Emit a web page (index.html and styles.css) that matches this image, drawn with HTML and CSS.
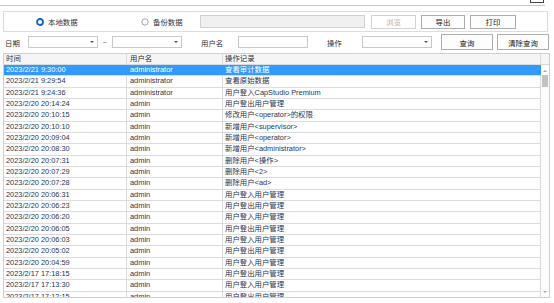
FILE: index.html
```html
<html lang="zh-CN">
<head>
  <meta charset="UTF-8">
  <title>审计日志</title>
  <link rel="stylesheet" href="styles.css">
</head>
<body>

  <div class="titlebar">
    <div class="title-btn"></div>
  </div>

  <div class="groupbox">
    <label class="radio radio-local">
      <svg width="8" height="8" viewBox="0 0 8 8"><circle cx="4" cy="4" r="3" fill="#fff" stroke="#1464c8" stroke-width="1.8"/></svg>
      <span>本地数据</span>
    </label>
    <label class="radio radio-backup">
      <svg width="8" height="8" viewBox="0 0 8 8"><circle cx="4" cy="4" r="3.2" fill="#fff" stroke="#8a8a8a" stroke-width="0.8"/></svg>
      <span>备份数据</span>
    </label>
    <div class="path-input"></div>
    <button class="btn btn-browse" disabled>浏览</button>
    <button class="btn btn-export">导出</button>
    <button class="btn btn-print">打印</button>
  </div>

  <div class="filterbar">
    <span class="flabel flabel-date">日期</span>
    <div class="combo"><i class="arrow"></i></div>
    <span class="tilde">~</span>
    <div class="combo"><i class="arrow"></i></div>
    <span class="flabel flabel-user">用户名</span>
    <div class="textbox"></div>
    <span class="flabel flabel-op">操作</span>
    <div class="combo"><i class="arrow"></i></div>
    <button class="btn btn-query">查询</button>
    <button class="btn btn-clear">清除查询</button>
  </div>

  <div class="grid">
    <div class="grid-head">
      <div class="cell c-time">时间</div>
      <div class="cell c-user">用户名</div>
      <div class="cell c-op">操作记录</div>
      <div class="cell c-pad"></div>
    </div>
    <div class="grid-main">
      <div class="grid-body" id="rows"></div>
      <div class="vscroll">
        <i class="sc-up"></i>
        <div class="sc-thumb"></div>
        <i class="sc-down"></i>
      </div>
    </div>
  </div>

  <script>
    const logs = [
      ['2023/2/21 9:30:00', 'administrator', '查看审计数据'],
      ['2023/2/21 9:29:54', 'administrator', '查看原始数据'],
      ['2023/2/21 9:24:36', 'administrator', '用户登入CapStudio Premium'],
      ['2023/2/20 20:14:24', 'admin', '用户登出用户管理'],
      ['2023/2/20 20:10:15', 'admin', '修改用户<operator>的权限'],
      ['2023/2/20 20:10:10', 'admin', '新增用户<supervisor>'],
      ['2023/2/20 20:09:04', 'admin', '新增用户<operator>'],
      ['2023/2/20 20:08:30', 'admin', '新增用户<administrator>'],
      ['2023/2/20 20:07:31', 'admin', '删除用户<操作>'],
      ['2023/2/20 20:07:29', 'admin', '删除用户<2>'],
      ['2023/2/20 20:07:28', 'admin', '删除用户<ad>'],
      ['2023/2/20 20:06:31', 'admin', '用户登入用户管理'],
      ['2023/2/20 20:06:23', 'admin', '用户登出用户管理'],
      ['2023/2/20 20:06:20', 'admin', '用户登入用户管理'],
      ['2023/2/20 20:06:05', 'admin', '用户登出用户管理'],
      ['2023/2/20 20:06:03', 'admin', '用户登入用户管理'],
      ['2023/2/20 20:05:02', 'admin', '用户登出用户管理'],
      ['2023/2/20 20:04:59', 'admin', '用户登入用户管理'],
      ['2023/2/17 17:18:15', 'admin', '用户登出用户管理'],
      ['2023/2/17 17:13:30', 'admin', '用户登入用户管理'],
      ['2023/2/17 17:12:15', 'admin', '用户登出用户管理']
    ];

    function esc(s) {
      return s.replace(/&/g, '&amp;').replace(/</g, '&lt;').replace(/>/g, '&gt;');
    }

    const body = document.getElementById('rows');
    logs.forEach((r, i) => {
      const row = document.createElement('div');
      row.className = i === 0 ? 'row selected' : 'row';
      row.innerHTML = `
        <div class="cell c-time">${esc(r[0])}</div>
        <div class="cell c-user">${esc(r[1])}</div>
        <div class="cell c-op">${esc(r[2])}</div>
      `;
      body.appendChild(row);
    });
  </script>

</body>
</html>
```

FILE: styles.css
```css
body {
  margin: 0;
  background: #fff;
  font-family: "Liberation Sans", "Noto Sans CJK SC", sans-serif;
  font-size: 7.4px;
  color: #333;
}
.titlebar {
  width: 545px;
  height: 5px;
  border-bottom: 1px solid #c8c8c8;
  display: flex;
  justify-content: flex-end;
}
.title-btn {
  width: 12px;
  height: 2px;
  margin-right: 1px;
  border: 1px solid #444;
  border-top: none;
}

/* data source group */
.groupbox {
  margin: 5px 0 0 3px;
  width: 545px;
  height: 21px;
  box-sizing: border-box;
  border: 1px solid #dcdcdc;
  display: flex;
  align-items: center;
}
.radio {
  display: flex;
  align-items: center;
  gap: 4px;
  color: #333;
}
.radio svg {
  display: block;
}
.radio-local {
  margin-left: 32px;
  width: 105px;
}
.radio-backup {
  width: 59px;
}
.path-input {
  width: 165px;
  height: 13px;
  box-sizing: border-box;
  background: #f0f0f0;
  border: 1px solid #d0d0d0;
}
.btn {
  height: 14px;
  box-sizing: border-box;
  padding: 0;
  font-family: inherit;
  font-size: 7.4px;
  color: #222;
  background: #fdfdfd;
  border: 1px solid #adadad;
  border-radius: 0;
}
.btn-browse {
  margin-left: 6px;
  width: 45px;
  color: #b4b4b4;
  border-color: #d2d2d2;
  background: #fff;
}
.btn-export {
  margin-left: 5px;
  width: 44px;
}
.btn-print {
  margin-left: 5px;
  width: 46px;
}

/* filter row */
.filterbar {
  margin-top: 2px;
  height: 16px;
  display: flex;
  align-items: center;
}
.flabel {
  color: #333;
}
.flabel-date {
  margin-left: 5px;
  width: 23px;
}
.flabel-user {
  margin-left: 19px;
  width: 37px;
}
.flabel-op {
  margin-left: 19px;
  width: 35px;
}
.tilde {
  width: 14px;
  text-align: center;
  color: #666;
}
.combo, .textbox {
  width: 70px;
  height: 12px;
  box-sizing: border-box;
  border: 1px solid #c8c8c8;
  background: #fff;
  position: relative;
}
.arrow {
  position: absolute;
  right: 3px;
  top: 4px;
  width: 0;
  height: 0;
  border-left: 2px solid transparent;
  border-right: 2px solid transparent;
  border-top: 2px solid #555;
}
.btn-query {
  margin-left: 9px;
  width: 52px;
  height: 16px;
}
.btn-clear {
  margin-left: 4px;
  width: 52px;
  height: 16px;
}

/* log grid */
.grid {
  margin: 3px 0 0 3px;
  width: 547px;
  height: 245px;
  box-sizing: border-box;
  border: 1px solid #cfcfcf;
  display: flex;
  flex-direction: column;
  overflow: hidden;
}
.grid-head {
  display: flex;
  height: 11px;
  box-sizing: border-box;
  background: #f5f5f5;
  border-bottom: 1px solid #dadada;
  line-height: 10px;
  color: #333;
}
.cell {
  box-sizing: border-box;
  border-right: 1px solid #dadada;
  white-space: nowrap;
  overflow: hidden;
}
.c-time {
  width: 123px;
  padding-left: 2px;
}
.c-user {
  width: 96px;
  padding-left: 3px;
}
.c-op {
  width: 318px;
  padding-left: 2px;
}
.c-pad {
  flex: 1;
  border-right: none;
}
.grid-main {
  flex: 1;
  display: flex;
  overflow: hidden;
}
.grid-body {
  width: 537px;
}
.row {
  display: flex;
  height: 11.33px;
  box-sizing: border-box;
  border-bottom: 1px solid #dcdcdc;
  line-height: 10.33px;
  color: #2a3552;
}
.row.selected {
  background: #3399ff;
  color: #fff;
}
.row.selected .cell {
  border-right-color: #3399ff;
}
.vscroll {
  flex: 1;
  background: #fcfcfc;
  display: flex;
  flex-direction: column;
  align-items: center;
}
.sc-up, .sc-down {
  width: 0;
  height: 0;
  border-left: 2px solid transparent;
  border-right: 2px solid transparent;
}
.sc-up {
  margin-top: 5px;
  border-bottom: 2px solid #a8a8a8;
}
.sc-down {
  margin-top: auto;
  margin-bottom: 4px;
  border-top: 2px solid #a8a8a8;
}
.sc-thumb {
  margin-top: 3px;
  width: 6px;
  height: 12px;
  background: #c2c2c2;
}
```
